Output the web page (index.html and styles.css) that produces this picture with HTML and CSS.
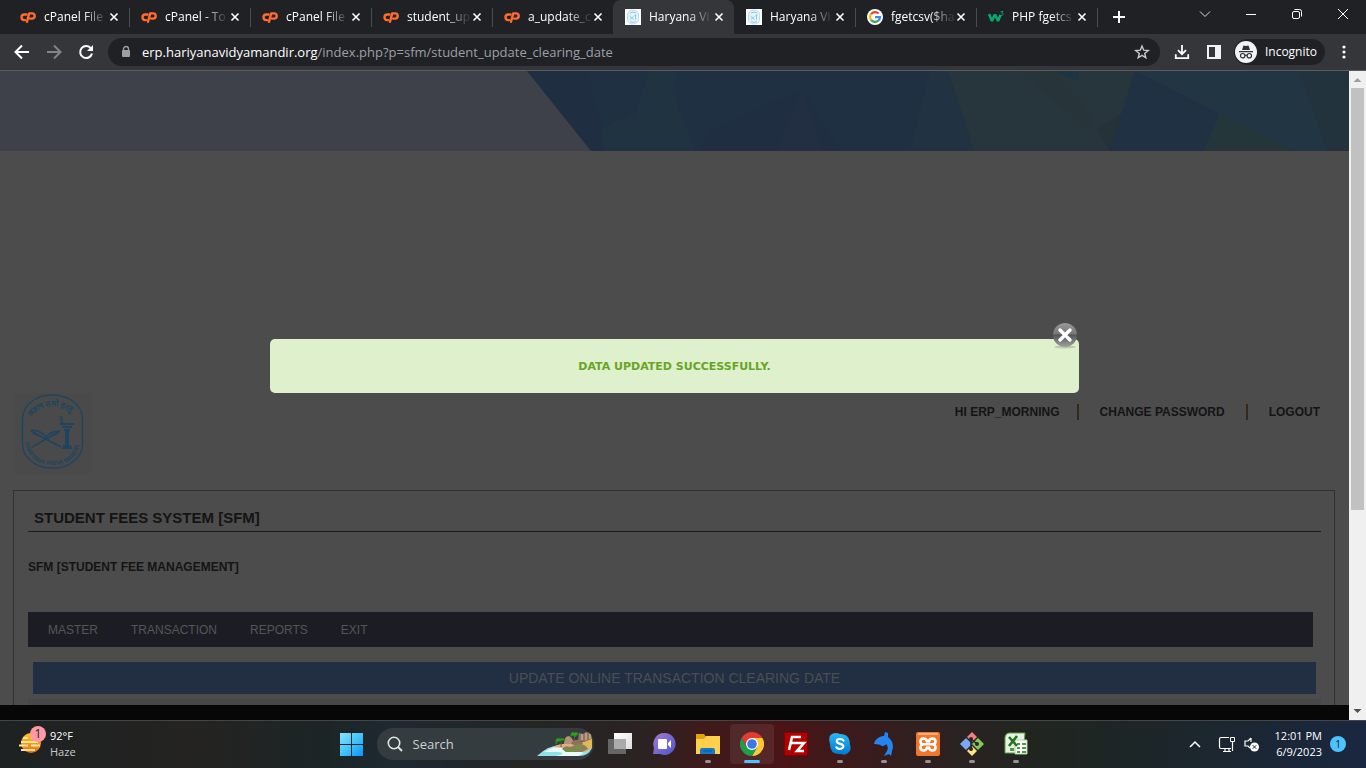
FILE: index.html
```html
<!DOCTYPE html>
<html lang="en">
<head>
<meta charset="utf-8">
<title>Haryana Vidya Mandir</title>
<link rel="stylesheet" href="styles.css">
</head>
<body>
<svg class="defs" aria-hidden="true">
  <defs>
    <symbol id="cp" viewBox="0 0 16 16"><path d="M6.500 5.500H4.300a2.800 2.800 0 0 0 0 5.600h.7" fill="none" stroke="#ff6c2c" stroke-width="2.400" stroke-linecap="round"/><path d="M7 12.800 9.200 4.400h2.900a2.600 2.600 0 0 1 0 5.200h-2" fill="none" stroke="#ff6c2c" stroke-width="2.400" stroke-linecap="round" stroke-linejoin="round"/></symbol>
    <symbol id="hvm" viewBox="0 0 16 16"><rect width="16" height="16" fill="#fff"/><rect x="2.500" y="1" width="11" height="14" rx="5" fill="#e4f4fb" stroke="#b5ddf0"/><path d="m4.500 7 4 3.500M8.500 7.500l-3.500 3M10.500 5.500v5M9.500 6.500h2M5 4q3-2 6 0M5 12.500q3 2 6 0" stroke="#8cc8e6" fill="none"/></symbol>
    <symbol id="x" viewBox="0 0 10 10"><path d="m1.500 1.500 7 7m0-7-7 7" stroke="currentColor" stroke-width="1.600" fill="none"/></symbol>
  </defs>
</svg>
<div class="window">
  <header class="tabstrip">
    <nav class="tabs" aria-label="Tabs">
      <div class="tab"><svg class="fav"><use href="#cp"/></svg><a href="#">cPanel File</a><button aria-label="Close tab"><svg><use href="#x"/></svg></button></div>
      <div class="tab"><svg class="fav"><use href="#cp"/></svg><a href="#">cPanel - To</a><button aria-label="Close tab"><svg><use href="#x"/></svg></button></div>
      <div class="tab"><svg class="fav"><use href="#cp"/></svg><a href="#">cPanel File</a><button aria-label="Close tab"><svg><use href="#x"/></svg></button></div>
      <div class="tab"><svg class="fav"><use href="#cp"/></svg><a href="#">student_up</a><button aria-label="Close tab"><svg><use href="#x"/></svg></button></div>
      <div class="tab plain"><svg class="fav"><use href="#cp"/></svg><a href="#">a_update_c</a><button aria-label="Close tab"><svg><use href="#x"/></svg></button></div>
      <div class="tab active"><svg class="fav"><use href="#hvm"/></svg><a href="#">Haryana Vi</a><button aria-label="Close tab"><svg><use href="#x"/></svg></button></div>
      <div class="tab"><svg class="fav"><use href="#hvm"/></svg><a href="#">Haryana Vi</a><button aria-label="Close tab"><svg><use href="#x"/></svg></button></div>
      <div class="tab"><svg class="fav" viewBox="0 0 16 16"><circle cx="8" cy="8" r="8" fill="#fff"/><g fill="none" stroke-width="2.200"><path d="M4 5.200A5 5 0 0 1 11.600 4.500" stroke="#ea4335"/><path d="M4 5.200a5 5 0 0 0 0 5.600" stroke="#fbbc05"/><path d="M4 10.800a5 5 0 0 0 7.300.9" stroke="#34a853"/><path d="M11.300 11.700A5 5 0 0 0 13 8.200H8" stroke="#4285f4"/></g></svg><a href="#">fgetcsv($ha</a><button aria-label="Close tab"><svg><use href="#x"/></svg></button></div>
      <div class="tab"><svg class="fav" viewBox="0 0 16 16"><path d="m1 5 3 7 3-6.500L10 12l2.500-6" fill="none" stroke="#04aa6d" stroke-width="2.600" stroke-linejoin="bevel"/><path d="M12.500 2.500h2.500l-1.300 1.600q1.600 0 1.300 1.400t-2.300.8" fill="none" stroke="#04aa6d" stroke-width=".9"/></svg><a href="#">PHP fgetcs</a><button aria-label="Close tab"><svg><use href="#x"/></svg></button></div>
    </nav>
    <button class="newtab" aria-label="New tab"><svg viewBox="0 0 12 12"><path d="M6 0v12M0 6h12" stroke="#fff" stroke-width="2"/></svg></button>
    <div class="winctl">
      <button aria-label="Search tabs"><svg viewBox="0 0 12 12"><path d="m1 3.500 5 5 5-5" fill="none" stroke="#ddd"/></svg></button>
      <button aria-label="Minimize"><svg viewBox="0 0 12 12"><path d="M1 6.500h10" stroke="#fff"/></svg></button>
      <button aria-label="Restore"><svg viewBox="0 0 12 12"><rect x="1.500" y="3.500" width="7" height="7" rx="1.500" fill="none" stroke="#fff"/><path d="M3.500 1.500h5a2 2 0 0 1 2 2v5" fill="none" stroke="#fff"/></svg></button>
      <button aria-label="Close"><svg viewBox="0 0 12 12"><path d="m1 1 10 10m0-10L1 11" stroke="#fff"/></svg></button>
    </div>
  </header>

  <div class="toolbar">
    <button aria-label="Back"><svg viewBox="0 0 16 16"><path d="M15 8H2M8 1.500 1.500 8 8 14.500" fill="none" stroke="#fff" stroke-width="2"/></svg></button>
    <button aria-label="Forward"><svg viewBox="0 0 16 16"><path d="M1 8h13M8 1.500 14.500 8 8 14.500" fill="none" stroke="#838486" stroke-width="2"/></svg></button>
    <button aria-label="Reload"><svg viewBox="0 0 16 16"><path d="M13 4.500A6 6 0 1 0 14 9.500" fill="none" stroke="#fff" stroke-width="2"/><path d="M15 1v6H9z" fill="#fff"/></svg></button>
    <div class="omnibox">
      <svg class="lock" viewBox="0 0 10 14"><rect x="1" y="5" width="8" height="7" rx="1" fill="#9aa0a6"/><path d="M2.500 6V4a2.500 2.500 0 0 1 5 0v2" fill="none" stroke="#9aa0a6" stroke-width="1.300"/></svg>
      <a class="url" href="#"><b>erp.hariyanavidyamandir.org</b>/index.php?p=sfm/student_update_clearing_date</a>
      <button aria-label="Bookmark"><svg viewBox="0 0 16 16"><path d="m8 2 1.700 4.200 4.500.3-3.500 2.900 1.100 4.400L8 11.400l-3.800 2.400 1.100-4.400L1.800 6.500l4.500-.3z" fill="none" stroke="#c7c9cc" stroke-width="1.400"/></svg></button>
    </div>
    <button aria-label="Downloads"><svg viewBox="0 0 18 18"><path d="M9 1v10M4.500 7 9 11.500 13.500 7M2 11.500V16h14v-4.500" fill="none" stroke="#fff" stroke-width="2"/></svg></button>
    <button aria-label="Side panel"><svg viewBox="0 0 16 16"><path d="M1 1h14v14H1zm2 2v10h6V3z" fill="#f1f3f4" fill-rule="evenodd"/></svg></button>
    <button class="incognito"><svg viewBox="0 0 22 22"><circle cx="11" cy="11" r="11" fill="#f1f3f4"/><path d="m7 9 1.500-4.500L11 5l2.500-.5L15 9zM4 10h14v1.300H4z" fill="#303134"/><g fill="none" stroke="#303134" stroke-width="1.200"><circle cx="7.700" cy="14.700" r="2.200"/><circle cx="14.300" cy="14.700" r="2.200"/><path d="M10 14.500q1-.6 2 0"/></g></svg>Incognito</button>
    <button class="kebab" aria-label="Menu"><svg viewBox="0 0 4 14"><circle cx="2" cy="2" r="1.600" fill="#fff"/><circle cx="2" cy="7" r="1.600" fill="#fff"/><circle cx="2" cy="12" r="1.600" fill="#fff"/></svg></button>
  </div>

  <div class="viewport">
    <main class="page">
      <svg class="banner" viewBox="0 0 1349 80" preserveAspectRatio="none" aria-hidden="true">
        <rect width="1349" height="80" fill="#1f3042"/>
        <path d="M527 0h60l15 58 2 22h-13z" fill="#202e41"/>
        <path d="M649 0h29l-6 18 23 62h-91l-4-22 35-16z" fill="#203341"/>
        <path d="m802 18 38 62H700l8-20z" fill="#202e42"/>
        <path d="m802 18 20 62h-45z" fill="#222e41"/>
        <path d="M930 0h18l26 80h-64z" fill="#213242"/>
        <path d="M948 0h187l-25 80H974z" fill="#26363c"/>
        <path d="M1020 0h33l40 48-5 10z" fill="#27343a"/>
        <path d="M1053 0h26v10z" fill="#1d3443"/>
        <path d="m1123 42-26 16 13 22z" fill="#26323a"/>
        <path d="M1135 0h214v80h-239z" fill="#223542"/>
        <path d="m1135 0 85 43-17 37h-93z" fill="#203143"/>
        <path d="m1220 43 73 37h-90z" fill="#25363b"/>
        <path d="M1299 0h50v80h-22z" fill="#23333e"/>
        <path d="M0 0h527l64 80H0z" fill="#3e4149"/>
      </svg>
      <div class="masthead">
        <svg class="crest" viewBox="0 0 78 80" role="img" aria-label="Hariyana Vidya Mandir">
          <rect width="78" height="80" fill="#4a4a4a"/>
          <g fill="none" stroke="#1d4560">
            <rect x="8.500" y="2" width="60" height="73" rx="29" ry="24" stroke-width="1.400"/>
            <path d="m17 38 30 16M46 38 18 54M17 37q10 0 15 7M46 38q-9 0-14 6M19 40l13 6 12-6" stroke-width="1.500"/>
            <path d="M46 31h14M48 34h10M50 37h6M49 53h8M48 55h10" stroke-width="1.800"/>
            <path d="M53 38v15" stroke-width="4"/>
            <path d="M48 30q-3-3-1-7 3 4 1 7"/>
            <path id="arcTop" d="M16 24q22-22 48 1" stroke="none"/>
            <path id="arcLow" d="M11 49q4 23 27.500 23T66 49" stroke="none"/>
          </g>
          <text class="motto"><textPath href="#arcTop">अज्ञान तमो हरतु</textPath></text>
          <text class="name"><textPath href="#arcLow">HARIYANA VIDYA MANDIR</textPath></text>
        </svg>
        <nav class="account" aria-label="Account">
          <span>HI ERP_MORNING</span>
          <a href="#">CHANGE PASSWORD</a>
          <a href="#">LOGOUT</a>
        </nav>
      </div>
      <section class="panel">
        <h1>STUDENT FEES SYSTEM [SFM]</h1>
        <h2>SFM [STUDENT FEE MANAGEMENT]</h2>
        <nav class="menu" aria-label="Main">
          <a href="#">MASTER</a><a href="#">TRANSACTION</a><a href="#">REPORTS</a><a href="#">EXIT</a>
        </nav>
        <h3>UPDATE ONLINE TRANSACTION CLEARING DATE</h3>
        <div class="form-area"></div>
      </section>
    </main>
    <div class="scrollbar" aria-hidden="true">
      <svg viewBox="0 0 17 17"><path d="m8.500 7 4 4h-8z" fill="#a0a0a0"/></svg>
      <div class="track"><div class="thumb"></div></div>
      <svg viewBox="0 0 17 17"><path d="m8.500 10 4-4h-8z" fill="#505050"/></svg>
    </div>
    <div class="overlay">
      <div class="dialog" role="alertdialog" aria-label="Message">
        <p>DATA UPDATED SUCCESSFULLY.</p>
        <button class="dismiss" aria-label="Close message"><svg viewBox="0 0 26 27"><defs><linearGradient id="ball" x2="0" y2="1"><stop stop-color="#999"/><stop offset=".45" stop-color="#777"/><stop offset=".5" stop-color="#555"/><stop offset="1" stop-color="#a0a0a0"/></linearGradient></defs><ellipse cx="13" cy="25" rx="11" ry="1.500" fill="#555" opacity=".25"/><circle cx="13" cy="13" r="12" fill="url(#ball)"/><path d="m8 8 10 10m0-10L8 18" stroke="#fff" stroke-width="3.400" stroke-linecap="round"/></svg></button>
      </div>
    </div>
  </div>

  <footer class="taskbar">
    <button class="weather">
      <svg viewBox="0 0 28 28"><defs><linearGradient id="sun" x2="0" y2="1"><stop stop-color="#ffc820"/><stop offset="1" stop-color="#f06a10"/></linearGradient></defs><circle cx="12" cy="17" r="10" fill="url(#sun)"/><path d="M4 12h5m3 0h7M2 16h17M0 19.500h9m3 0h9M2 24h14" stroke="#fbe4a4" stroke-width="1.800"/><circle cx="19" cy="8" r="8" fill="#ff99a4"/><text x="19" y="12" class="badge-num">1</text></svg>
      <span>92°F<br><small>Haze</small></span>
    </button>
    <div class="apps">
      <button aria-label="Start"><svg viewBox="0 0 24 24"><defs><linearGradient id="win" x2="1" y2="1"><stop stop-color="#8be2fb"/><stop offset=".5" stop-color="#43c6fb"/><stop offset="1" stop-color="#0a93fb"/></linearGradient></defs><path d="M1 1h11v11H1zm12 0h11v11H13zM1 13h11v11H1zm12 0h11v11H13z" fill="url(#win)"/></svg></button>
      <label class="search">
        <svg class="lens" viewBox="0 0 16 16"><circle cx="7" cy="7" r="5.700" fill="none" stroke="#e4e6e6" stroke-width="1.600"/><path d="m11 11 4 4" stroke="#e4e6e6" stroke-width="1.800"/></svg>
        <input type="text" placeholder="Search" aria-label="Search">
        <svg class="island" viewBox="0 0 58 28"><path d="M1 26Q12 15 30 14h26v4q-4 8-12 8z" fill="#8fe3e4"/><path d="M8 22q14-9 28-5l12 6-6 3H20q12-3 2-4z" fill="#e9fbfa"/><path d="M16 17q12-6 24-2l16-7v9q-4 6-12 5-12-4-28-5z" fill="#d9b184"/><path d="M40 18 56 8v8q-5 5-12 5z" fill="#dfbd4c"/><path d="M43 3l4 1 3-2 5 1 1 6-8 3-6-1z" fill="#93745e"/><path d="M46 4v6m4-7v7m4-6v5" stroke="#c9ab90" stroke-width="1.500"/><path d="M28 14q0-8 5-8 4 2 5 8z" fill="#b39277"/><path d="M35 14q2-5 7-4l5 3-3 4z" fill="#8d715a"/><path d="M26 19q3-4 8-2l8-3q8 0 10 5l-6 3H30z" fill="#8f7c5a"/><path d="M38 17q6-4 8 0l-5 3zM28 20q5-3 12 2H30z" fill="#6c9a32"/><path d="M25 17q1-5-1-8m14 2q1-3 0-7" stroke="#7a5330" fill="none"/><path d="M20 10q1-3 4-1 4-2 5 2-3-2-5 0-3-1-4 3zm15-6q1-3 3-1 4-2 4 2-2-1-3 2-1-3-4-1z" fill="#37a022" stroke="#258a1c"/></svg>
      </label>
      <button aria-label="Task view"><svg viewBox="0 0 24 24"><defs><linearGradient id="tv" x2="1" y2="1"><stop stop-color="#fff"/><stop offset="1" stop-color="#ddd"/></linearGradient></defs><path d="M6 1h18v16H6z" fill="url(#tv)"/><path d="M0 7h18v15H0z" fill="#666"/><path d="M6 7h12v10H6z" fill="#aaa"/></svg></button>
      <button aria-label="Chat"><svg viewBox="0 0 24 24"><defs><linearGradient id="chat" x2="1" y2="1"><stop stop-color="#a678d0"/><stop offset="1" stop-color="#4b56cf"/></linearGradient></defs><path d="M12 1a11 11 0 1 1-4 21H1l1-6A11 11 0 0 1 12 1z" fill="url(#chat)"/><rect x="6" y="7" width="9" height="10" rx="1" fill="#fff"/><path d="m16 11 3-3v8l-3-3z" fill="#fff"/></svg></button>
      <button class="running" aria-label="File Explorer"><svg viewBox="0 0 24 24"><path d="M0 2h8l2 3h14v6H0z" fill="#e2a313"/><path d="M0 7h8l2-3h14v18H0z" fill="#ffd04b"/><path d="M4 22v-4q0-2 2-2h11q2 0 2 2v4z" fill="#1679c8"/><path d="M7 19h9" stroke="#0a5799"/></svg></button>
      <button class="running current" aria-label="Chrome"><svg viewBox="0 0 24 24"><path d="M12 6h10.400A12 12 0 0 1 12 24l5.200-9z" fill="#fcc934"/><path d="M17.200 15 12 24A12 12 0 0 1 1.600 6l5.200 9z" fill="#1e9e4a"/><path d="M1.600 6A12 12 0 0 1 22.400 6H12l-5.200 9z" fill="#e33b2e"/><circle cx="12" cy="12" r="6" fill="#fff"/><circle cx="12" cy="12" r="4.800" fill="#3b78e7"/></svg></button>
      <button aria-label="FileZilla"><svg viewBox="0 0 24 24"><rect x=".5" y=".5" width="23" height="23" fill="#b50000" stroke="#7a0000" stroke-dasharray="1 1"/><path d="M5 18 8 5h9M7 11h6M12 11h8l-7 8h7" fill="none" stroke="#fff" stroke-width="2.600"/></svg></button>
      <button class="running" aria-label="Skype"><svg viewBox="0 0 24 24"><defs><linearGradient id="sky" x2="0" y2="1"><stop stop-color="#28b9f0"/><stop offset="1" stop-color="#0078d4"/></linearGradient></defs><path d="M7 1q3 0 5 1 10 0 10 11 2 5-2 8-3 3-7 1Q2 23 2 12-1 2 7 1z" fill="url(#sky)"/><path d="M15.500 8.500Q14.500 7 12 7 8.800 7 8.800 9.300c0 3.400 6.600 1.700 6.600 5 0 2.400-3.400 2.700-4.400 2.500q-2-.3-2.600-1.500" fill="none" stroke="#fff" stroke-width="2.200" stroke-linecap="round"/></svg></button>
      <button class="running" aria-label="MySQL tool"><svg viewBox="0 0 24 24"><path d="m2 12 1-3q4-5 9-5l1-4 3 1v4q5 4 5 10l-1 4-1 5-2-2-5 2 3-5q2-4-1-7-1 2-5 2v-1q-4-1-7-1z" fill="#2684f0"/></svg></button>
      <button class="running" aria-label="XAMPP"><svg viewBox="0 0 24 24"><rect width="24" height="24" rx="2" fill="#f0762b"/><path d="M2 2h20" stroke="#ffad78" stroke-width="2"/><path d="M11 9.500Q10.500 6.500 7.500 6.500 4.500 6.500 4.500 9.500T7.500 12.300H16.500Q19.500 12.300 19.500 9.500T16.500 6.500Q13.500 6.500 13 9.500M7.500 12.300Q4.500 12.500 4.500 15.500T7.500 18.500Q10.500 18.500 11 15.500M16.500 12.300Q19.500 12.500 19.500 15.500T16.500 18.500Q13.500 18.500 13 15.500" fill="none" stroke="#fff" stroke-width="2.600" stroke-linecap="round"/></svg></button>
      <button class="running" aria-label="Git"><svg viewBox="0 0 24 24"><path d="m12 0 5 5-5 5-5-5z" fill="#f77c82"/><path d="m6 6 6 6-6 6-6-6z" fill="#7ba7f6"/><path d="m18 6 6 6-6 6-6-6z" fill="#82cc5b"/><path d="m12 14 5 5-5 5-5-5z" fill="#fbe37d"/><path d="M11 7v11M11 7l6 5" stroke="#2b2525" stroke-width="1.500"/><circle cx="11" cy="17" r="2" fill="#2b2525"/><circle cx="17" cy="12" r="2" fill="#2b2525"/><circle cx="11" cy="7" r="2" fill="#2b2525"/></svg></button>
      <button class="running" aria-label="Excel"><svg viewBox="0 0 24 24"><path d="M5 1h16l-2 20H1V5q1-4 4-4z" fill="#e8f2e2" stroke="#58a143"/><path d="M11 8h12v14H11z" fill="#fff" stroke="#a8cfa0"/><path d="M13 11h3v2h-3zm5 0h4v2h-4zm-5 4h3v2h-3zm5 0h4v2h-4zm-5 4h3v2h-3zm5 0h4v2h-4zM6 16h4v3H6z" fill="#4d9a45"/><path d="m5 5 8 9M13 4l-8 10" stroke="#24731f" stroke-width="2.600"/></svg></button>
    </div>
    <div class="tray">
      <button aria-label="Hidden icons"><svg viewBox="0 0 12 12"><path d="m1 9 5-5 5 5" fill="none" stroke="#fff" stroke-width="1.500"/></svg></button>
      <button class="status" aria-label="Network and sound">
        <svg viewBox="0 0 18 18"><path d="M11 2.500H3q-1.500 0-1.500 1.500v8q0 1.500 1.500 1.500h10M5 16.500h8M7 14v2m4-2v2M14.500 7v9" fill="none" stroke="#fff" stroke-width="1.200"/><path d="M12.500 2.500h4v4h-4z" fill="none" stroke="#fff"/></svg>
        <svg viewBox="0 0 18 18"><path d="M8 3 5 6H2v5h3l2 2M8 3v4" fill="none" stroke="#fff" stroke-width="1.200"/><circle cx="11.500" cy="12" r="4.500" fill="#fff"/><path d="m9.700 10.200 3.600 3.600m0-3.600-3.600 3.600" stroke="#1b2530"/></svg>
      </button>
      <button class="clock">12:01 PM<br>6/9/2023</button>
      <button class="count" aria-label="1 notification">1</button>
    </div>
  </footer>
</div>
</body>
</html>
```
FILE: styles.css
```css
* { box-sizing: border-box; }
html, body { height: 100%; margin: 0; }
body { background: #202124; color: #fff; font: 12px/16px "Open Sans", "Noto Sans", sans-serif; overflow: hidden; }
button { padding: 0; border: 0; background: none; color: inherit; font: inherit; display: flex; align-items: center; justify-content: center; }
a { color: inherit; text-decoration: none; }
svg { display: block; flex: none; }
h1, h2, h3, p { margin: 0; }
.defs { position: absolute; width: 0; height: 0; }
.window { height: 100vh; display: flex; flex-direction: column; }

/* Tab strip */
.tabstrip { display: flex; height: 34px; flex: none; background: #202124; padding-left: 8px; }
.tabs { display: flex; flex: 0 1 1089px; min-width: 0; }
.tab { position: relative; flex: 1 1 121px; min-width: 0; display: flex; align-items: center; padding: 0 10px 0 12px; }
.tab::after { content: ""; position: absolute; right: -1px; top: 8px; width: 1px; height: 19px; background: #4a4c50; }
.tab.plain::after, .tab.active::after { display: none; }
.tab.active { background: #35363a; border-radius: 8px 8px 0 0; }
.fav { width: 16px; height: 16px; margin-right: 8px; }
.tab a { flex: 1; min-width: 0; overflow: hidden; white-space: nowrap; mask-image: linear-gradient(90deg, #000 60%, #0002 92%); }
.tab button, .tab button svg { width: 10px; height: 10px; }
.newtab { width: 44px; }
.newtab svg { width: 12px; height: 12px; }
.winctl { display: flex; margin-left: auto; padding-bottom: 6px; }
.winctl button { width: 46px; }
.winctl svg { width: 12px; height: 12px; }

/* Toolbar */
.toolbar { display: flex; align-items: center; height: 37px; flex: none; padding: 0 14px 0 6px; background: #35363a; border-bottom: 1px solid #5b5c60; }
.toolbar > button { width: 32px; height: 28px; }
.toolbar button svg { width: 16px; height: 16px; }
.omnibox { flex: 1; min-width: 0; height: 28px; display: flex; align-items: center; margin: 0 6px; padding: 0 10px 0 13px; border-radius: 14px; background: #202124; }
.lock { width: 10px; height: 14px; margin-right: 11px; }
.url { flex: 1; color: #9aa0a6; font-size: 13px; line-height: 18px; white-space: nowrap; overflow: hidden; }
.url b { font-weight: 400; color: #fff; }
.toolbar .incognito { width: auto; height: 26px; gap: 8px; margin: 0 4px; padding: 0 8px 0 1px; border-radius: 13px; background: #202124; }
.toolbar .incognito svg { width: 22px; height: 22px; }
.toolbar .kebab { width: 16px; margin-left: 7px; }
.toolbar .kebab svg { width: 4px; height: 14px; }

/* Page */
.viewport { position: relative; flex: 1; min-height: 0; display: flex; background: #070707; }
.page { flex: 1; min-width: 0; margin-bottom: 15px; overflow: hidden; background: #4c4c4c; color: #141414; font-family: "Liberation Sans", Arial, sans-serif; }
.banner { width: 100%; height: 80px; }
.masthead { display: flex; justify-content: space-between; margin-top: 242px; padding: 0 14px; }
.crest { width: 78px; height: 80px; }
.motto, .name { fill: #1d4560; font: bold 6px "Liberation Sans", Arial, sans-serif; }
.motto { font-size: 8px; }
.account { display: flex; align-items: center; height: 16px; margin-top: 11px; font-weight: bold; font-size: 12px; }
.account > * { padding: 0 21px; }
.account > :first-child { padding-right: 17px; }
.account > :last-child { padding-right: 15px; }
.account > * + * { border-left: 2px solid #33291f; }
.panel { height: 400px; margin: 17px 14px 0 13px; padding: 14px 13px 0 14px; border: 1px solid #303030; }
.panel h1 { padding: 4px 6px; border-bottom: 1px solid #1c1c1c; font-size: 15px; line-height: 18px; }
.panel h2 { margin-top: 26px; font-size: 12px; line-height: 18px; }
.menu { display: flex; gap: 33px; align-items: center; height: 35px; margin: 36px 8px 0 0; padding: 0 20px; background: #1c1d24; color: #555; font-size: 12px; }
.panel h3 { margin: 15px 5px 5px; background: #222e41; color: #4a4f56; font-size: 14px; font-weight: 400; line-height: 32px; text-align: center; }
.form-area { height: 200px; background: #484848; }
.scrollbar { width: 17px; display: flex; flex-direction: column; background: #f0f0f0; }
.scrollbar svg { width: 17px; height: 17px; }
.track { flex: 1; padding: 0 2px; }
.thumb { height: 68.6%; background: #c1c1c1; }

/* Message */
.overlay { position: absolute; inset: 0 17px 0 0; display: flex; justify-content: center; align-items: flex-start; padding-top: 268px; }
.dialog { position: relative; width: 60%; padding: 19px 18px 17px; border-radius: 5px; background: #dff0cc; text-align: center; color: #67a526; font: bold 11px/18px "DejaVu Sans", Verdana, sans-serif; }
.dismiss { position: absolute; top: -17px; right: 1px; }
.dismiss svg { width: 26px; height: 27px; }

/* Taskbar */
.taskbar { flex: none; height: 48px; display: grid; grid-template-columns: 1fr auto 1fr; align-items: center; box-shadow: inset 0 1px #444546; background: linear-gradient(90deg, #1e2223, #242321 14%, #1c2526 24%, #1e2932 29%, #242525 38%, #2a2322 47%, #3d1b1c 51%, #4a1416 57%, #3a1b1c 63%, #2a2221 70%, #20251f 76%, #1c2628 84%, #1a2740 100%); }
.weather { justify-self: start; gap: 3px; margin-left: 19px; text-align: left; font-size: 11px; }
.weather svg { width: 28px; height: 28px; margin-bottom: 8px; }
.weather small { font-size: 11px; color: #c8caca; }
.badge-num { fill: #222; font: 12px "Open Sans", sans-serif; text-anchor: middle; }
.apps { display: flex; align-items: center; }
.apps > button { position: relative; width: 44px; height: 40px; border-radius: 4px; }
.apps > button svg { width: 24px; height: 24px; }
.running::after { content: ""; position: absolute; left: 19px; bottom: 1px; width: 6px; height: 3px; border-radius: 2px; background: #9a9292; }
.apps > .current { background: #ffffff14; }
.current::after { left: 14px; width: 16px; background: #4cc2ff; }
.search { display: flex; align-items: center; width: 217px; height: 32px; margin: 0 4px; padding-left: 10px; border-radius: 16px; background: #343c40; overflow: hidden; }
.lens { width: 16px; height: 16px; margin-right: 10px; }
.search input { flex: 1; min-width: 0; padding: 0; border: 0; background: none; color: #fff; font: inherit; font-size: 13px; outline: 0; }
.search input::placeholder { color: #cdd0d1; opacity: 1; }
.island { width: 58px; height: 28px; }
.tray { justify-self: end; display: flex; align-items: center; padding-right: 20px; }
.tray > button { height: 40px; }
.tray svg { width: 12px; height: 12px; }
.status { gap: 7px; margin: 0 14px 0 17px; }
.tray .status svg { width: 18px; height: 18px; }
.tray .clock { display: block; text-align: right; font-size: 11px; }
.tray .count { width: 16px; height: 16px; margin-left: 8px; border-radius: 50%; background: #4cc2ff; color: #123; font-size: 10px; }
```
